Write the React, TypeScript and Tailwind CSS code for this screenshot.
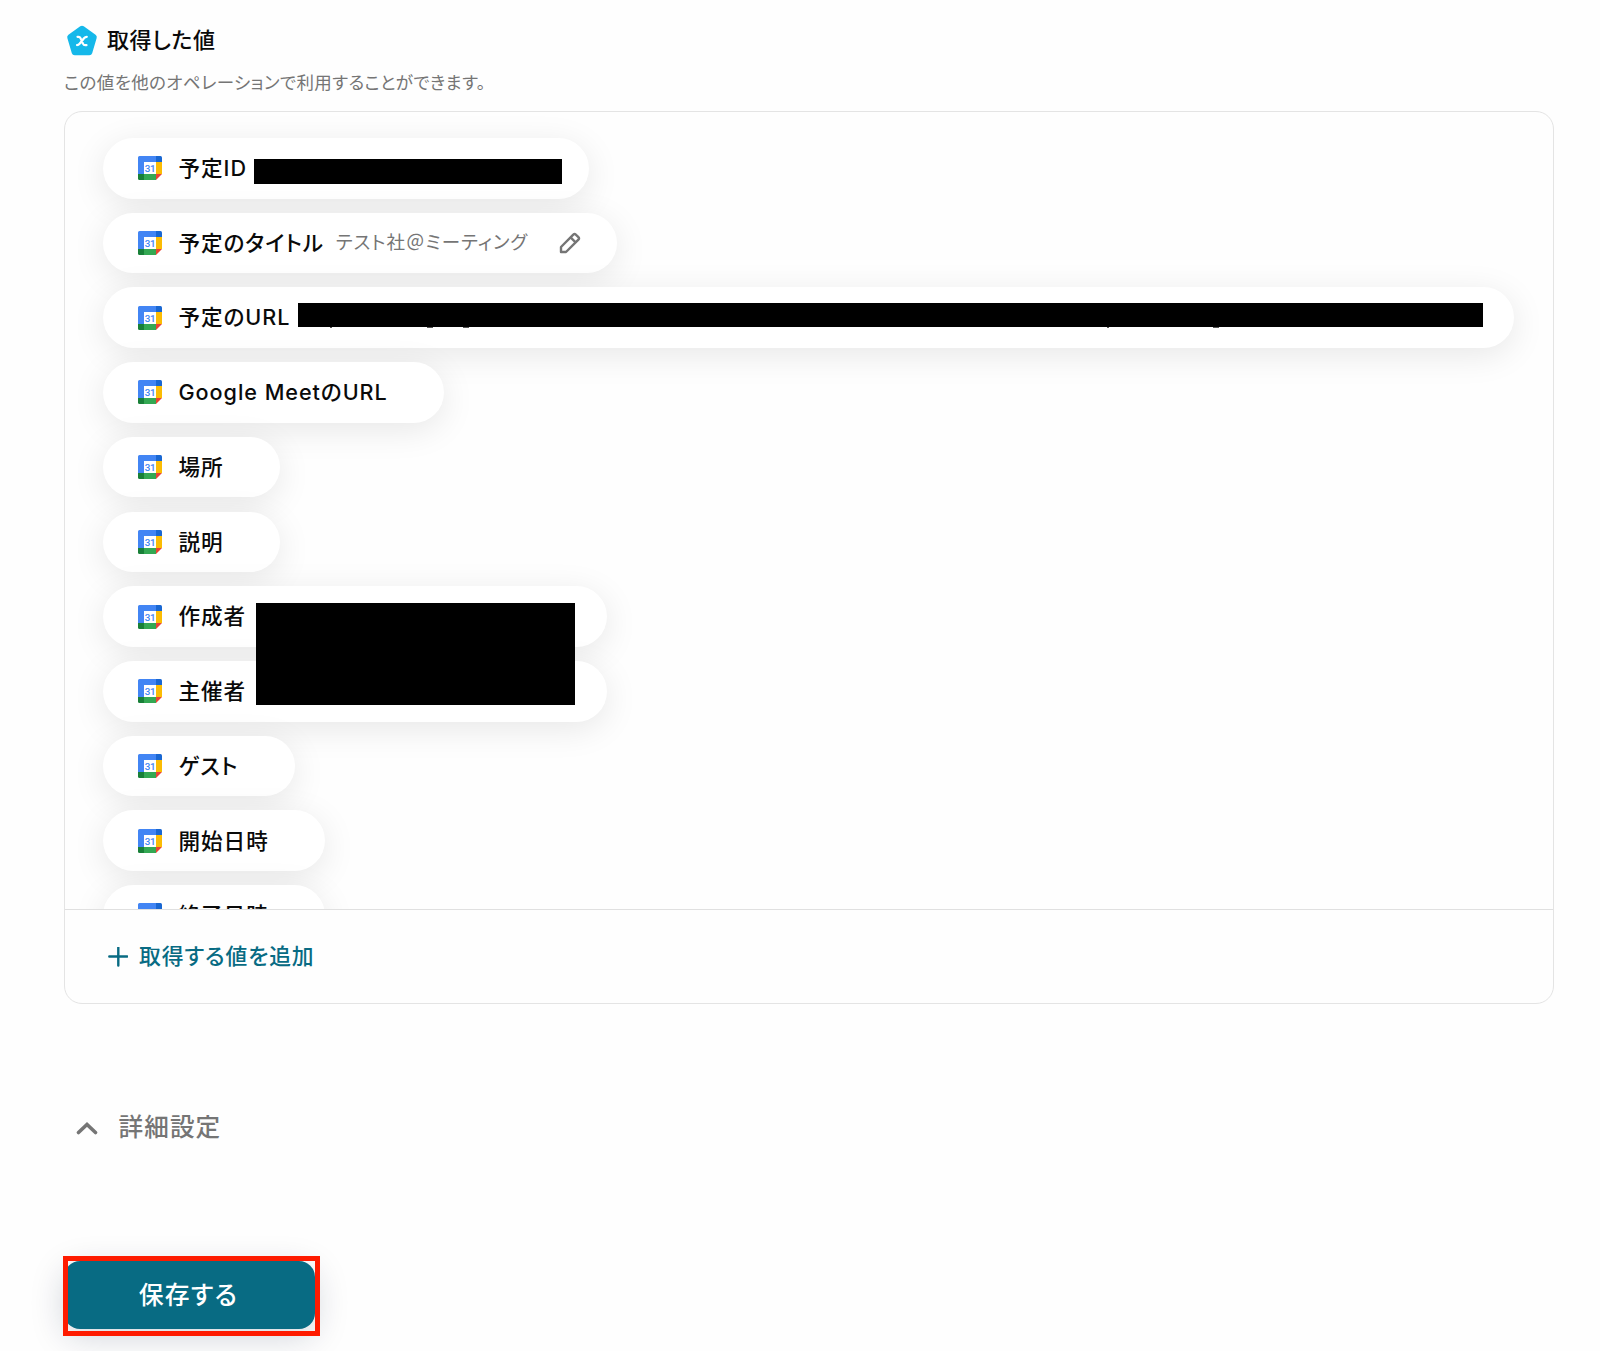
import type { ReactNode } from "react";

type OutputValue = {
  id: string;
  label: string;
  width: string;
  content?: ReactNode;
};

function CalendarIcon() {
  return (
    <svg viewBox="0 0 24 24" className="h-6 w-6 shrink-0">
      <path d="M1.5 0H18v6H6v12H0V1.5A1.5 1.5 0 0 1 1.5 0Z" fill="#4285f4" />
      <path d="M18 0h4.5A1.5 1.5 0 0 1 24 1.5V6h-6Z" fill="#1967d2" />
      <path d="M18 6h6v12h-6Z" fill="#fbbc04" />
      <path d="M6 18h12v6H6Z" fill="#34a853" />
      <path d="M0 18h6v6H1.5A1.5 1.5 0 0 1 0 22.5Z" fill="#188038" />
      <path d="M18 18h6l-6 6Z" fill="#ea4335" />
      <path d="M6 6h12v12H6Z" fill="#fff" />
      <text
        x="12"
        y="15.6"
        textAnchor="middle"
        fontSize="9.8"
        fontWeight="500"
        letterSpacing="-0.3"
        fontFamily="Roboto, sans-serif"
        fill="#4285f4"
      >
        31
      </text>
    </svg>
  );
}

function PentagonIcon() {
  return (
    <svg viewBox="0 0 32 32" className="h-8 w-8 shrink-0">
      <path
        d="M16 4.7 27.8 13.2 23.3 28.3H8.7L4.2 13.2Z"
        fill="#15b8ea"
        stroke="#15b8ea"
        strokeWidth="6"
        strokeLinejoin="round"
      />
      <path
        d="M11.5 12.8h1c1 0 1.600.4 2 1.300l2.600 5.800c.4.900 1 1.300 2 1.300h1.400M20.800 12.800c-1.200 0-2 .4-2.800 1.400l-4.400 5.500c-.7.9-1.400 1.400-2.600 1.400"
        fill="none"
        stroke="#fff"
        strokeWidth="2.2"
        strokeLinecap="round"
      />
    </svg>
  );
}

function PencilIcon() {
  return (
    <svg viewBox="0 0 22 22" className="h-[22px] w-[22px] shrink-0" fill="none" stroke="#757575" strokeWidth="2.4">
      <path d="M2 20v-5L14.3 2.6a1.8 1.8 0 0 1 2.5 0l2.6 2.6a1.8 1.8 0 0 1 0 2.5L7 20Z" strokeLinejoin="round" />
      <path d="m11.6 5.4 5 5" />
    </svg>
  );
}

// The thin row below the mask holds the descender tips that stick out under it.
function MaskedUrl() {
  return (
    <span className="mr-[31px] ml-auto flex w-[1185px] flex-col pb-[5px]">
      <span className="h-6 bg-black" />
      <span className="flex h-px pl-8">
        <span className="w-[2px] bg-[#555]" />
        <span className="ml-[95px] w-[6px] bg-[#555]" />
        <span className="ml-[30px] w-[6px] bg-[#555]" />
        <span className="ml-[638px] w-[2px] bg-[#555]" />
        <span className="ml-[104px] w-[6px] bg-[#555]" />
      </span>
    </span>
  );
}

const VALUES: OutputValue[] = [
  {
    id: "event-id",
    label: "予定ID",
    width: "w-[486px]",
    content: (
      <span className="mr-[27px] ml-auto flex w-[308px] pt-[6px]">
        <span className="h-[25px] grow bg-black" />
      </span>
    ),
  },
  {
    id: "title",
    label: "予定のタイトル",
    width: "w-[514px]",
    content: (
      <span className="flex grow items-center justify-between pr-9 pl-3">
        <span className="pb-px text-[18.5px] tracking-[1px] text-[#757575]">
          テスト社＠ミーティング
        </span>
        <PencilIcon />
      </span>
    ),
  },
  { id: "url", label: "予定のURL", width: "w-[1411px]", content: <MaskedUrl /> },
  { id: "meet", label: "Google MeetのURL", width: "w-[341px]" },
  { id: "place", label: "場所", width: "w-[177px]" },
  { id: "description", label: "説明", width: "w-[177px]" },
  { id: "creator", label: "作成者", width: "w-[504px]" },
  { id: "organizer", label: "主催者", width: "w-[504px]" },
  { id: "guest", label: "ゲスト", width: "w-[192px]" },
  { id: "start", label: "開始日時", width: "w-[222px]" },
  { id: "end", label: "終了日時", width: "w-[222px]" },
];

function ValuePill({ value }: { value: OutputValue }) {
  return (
    <li
      className={`flex h-[60.5px] shrink-0 items-center rounded-full bg-white pl-[35px] whitespace-nowrap shadow-[0_7px_34px_rgba(0,0,0,0.095)] ${value.width}`}
    >
      <span className="flex items-center gap-[16.5px] text-[21.6px] font-medium tracking-[0.95px] text-[#0a0a0a]">
        <CalendarIcon />
        {value.label}
      </span>
      {value.content}
    </li>
  );
}

export default function App() {
  return (
    <main className="flex h-[1351px] w-[1600px] flex-col items-start overflow-hidden bg-[#fefefe] pt-6 pl-16 font-[Inter,'Noto_Sans_CJK_JP',sans-serif] [font-feature-settings:'palt']">
      <header className="flex flex-col gap-[13px]">
        <h1 className="flex h-8 items-center gap-[9px] pl-[2px] text-[22px] font-medium tracking-[0.6px] text-[#0a0a0a]">
          <PentagonIcon />
          取得した値
        </h1>
        <p className="h-7 text-[17.5px] leading-7 tracking-[0.38px] text-[#757575]">
          この値を他のオペレーションで利用することができます。
        </p>
      </header>

      <section className="mt-[14px] flex h-[893px] w-[1490px] flex-col overflow-hidden rounded-[18px] border border-[#e4e4e4]">
        <div className="relative h-[797px] shrink-0 overflow-hidden pt-[26px] pl-[38px]">
          <ul className="flex flex-col gap-[14.23px]">
            {VALUES.map((value) => (
              <ValuePill key={value.id} value={value} />
            ))}
          </ul>
          {/* one mask over both the creator and the organizer rows */}
          <span className="absolute top-[491px] left-[191px] h-[102px] w-[319px] bg-black" />
        </div>
        <div className="flex grow items-center border-t border-[#e0e0e0] pl-[43px]">
          <button type="button" className="flex items-center gap-[11px] text-[21.8px] font-medium tracking-[0.9px] text-[#086b83]">
            <svg viewBox="0 0 20 20" className="h-5 w-5" stroke="#086b83" strokeWidth="2.4" strokeLinecap="round">
              <path d="M10.300.5v18M1.300 9.500h18" />
            </svg>
            取得する値を追加
          </button>
        </div>
      </section>

      <button type="button" className="mt-[105px] flex h-9 items-center gap-[20.5px] pl-3 text-[24.6px] font-medium tracking-[1.1px] text-[#757575]">
        <svg viewBox="0 0 22 16" className="h-4 w-[22px]" fill="none" stroke="#757575" strokeWidth="3.6" strokeLinecap="round">
          <path d="M2.5 13.5 11 5.5l8.5 8" />
        </svg>
        詳細設定
      </button>

      <div className="relative mt-[116px] flex h-[68px] w-[251px]">
        <button
          type="button"
          className="flex grow items-center justify-center rounded-[16px] bg-[#086b83] pt-px pr-[2px] text-[24.8px] font-medium tracking-[1.3px] text-white shadow-[0_8px_34px_rgba(8,30,60,0.18)]"
        >
          保存する
        </button>
        <span className="absolute -top-[5px] -left-px h-[80px] w-[257px] border-[5px] border-[#fe1b00]" />
      </div>
    </main>
  );
}
